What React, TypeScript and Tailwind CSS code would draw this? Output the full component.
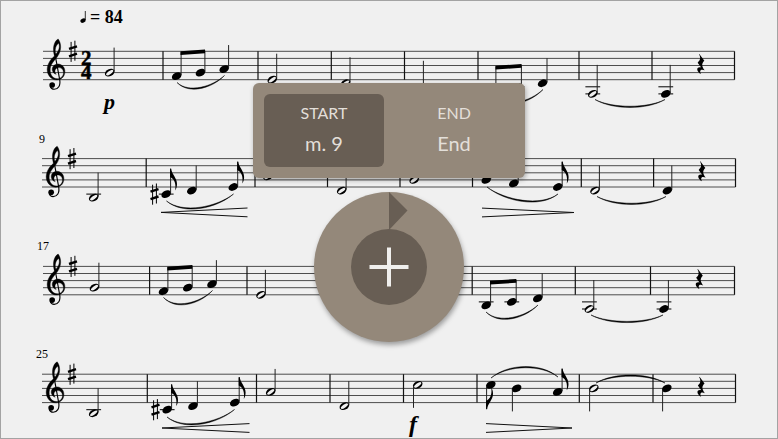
import { useState } from "react";

type Note = {
  x: number;
  pos: number; // half spaces below the top staff line
  half?: boolean;
  stem?: number; // stem length, negative when it points down
  flag?: boolean;
  sharp?: boolean;
};
type Curve = [number, number, number, number, number];
type Beam = [number, number, number, number];
type Hairpin = { from: number; to: number; y: number; closing?: boolean };
type System = {
  top: number;
  left: number;
  right: number;
  label?: { text: string; x: number };
  bars: number[];
  notes: Note[];
  beams: Beam[];
  curves: Curve[];
  hairpins: Hairpin[];
  rest: number;
};

const STEP = 3.55;

const systems: System[] = [
  {
    top: 51.3, left: 43, right: 734.5,
    bars: [163, 258, 331.3, 404.5, 478, 579, 652, 734.5],
    notes: [
      { x: 109.7, pos: 6, half: true, stem: 25 },
      { x: 176.7, pos: 7, stem: 24 },
      { x: 200.5, pos: 6, stem: 22 },
      { x: 224.2, pos: 5, stem: 24 },
      { x: 272.3, pos: 8, half: true, stem: 26 },
      { x: 345.6, pos: 9, half: true, stem: 26 },
      { x: 419, pos: 10, half: true, stem: 26 },
      { x: 491.5, pos: 11, stem: 24 },
      { x: 517, pos: 10, stem: 22 },
      { x: 542.6, pos: 9, stem: 25 },
      { x: 592.8, pos: 12, half: true, stem: 29 },
      { x: 665.8, pos: 12, stem: 29 },
    ],
    beams: [[180.5, 51.2, 205, 49.4], [495.5, 65.7, 521.5, 64]],
    curves: [[177, 82.5, 224.5, 75.5, 11], [492, 97, 543, 89.5, 12], [595, 99.5, 665, 99.5, 9]],
    hairpins: [],
    rest: 701,
  },
  {
    top: 158.6, left: 42, right: 735.5,
    label: { text: "9", x: 39 },
    bars: [146.2, 255, 327.5, 400, 472.5, 581.3, 653.6, 735.5],
    notes: [
      { x: 93.7, pos: 11, half: true, stem: 25 },
      { x: 166.2, pos: 10, stem: 25, flag: true, sharp: true },
      { x: 191.8, pos: 9, stem: 25 },
      { x: 233.3, pos: 8, stem: 25, flag: true },
      { x: 268, pos: 5, half: true, stem: 24 },
      { x: 341.7, pos: 9, half: true, stem: 25 },
      { x: 414.2, pos: 6, half: true, stem: 24 },
      { x: 486.3, pos: 6, stem: 24 },
      { x: 513.8, pos: 7, stem: 24 },
      { x: 557.8, pos: 8, stem: 25, flag: true },
      { x: 595, pos: 9, half: true, stem: 25 },
      { x: 667.4, pos: 9, stem: 25 },
    ],
    beams: [],
    curves: [[166.5, 201, 233.5, 194, 13], [487, 187, 558, 194, 13], [597, 196.5, 666, 196.5, 9]],
    hairpins: [{ from: 161, to: 247.5, y: 212.4 }, { from: 482, to: 574, y: 212.5, closing: true }],
    rest: 702,
  },
  {
    top: 266.4, left: 43, right: 734.5,
    label: { text: "17", x: 37 },
    bars: [149.6, 247, 325, 400, 472.2, 575.3, 650.5, 734.5],
    notes: [
      { x: 94.5, pos: 6, half: true, stem: 25 },
      { x: 163.5, pos: 7, stem: 24 },
      { x: 187.8, pos: 6, stem: 22 },
      { x: 212, pos: 5, stem: 24 },
      { x: 261, pos: 8, half: true, stem: 25 },
      { x: 486.2, pos: 11, stem: 24 },
      { x: 511.8, pos: 10, stem: 22 },
      { x: 537.8, pos: 9, stem: 25 },
      { x: 589.4, pos: 12, half: true, stem: 29 },
      { x: 664, pos: 12, stem: 29 },
    ],
    beams: [[167.3, 266.8, 192.3, 265], [490, 280.8, 516.3, 279]],
    curves: [[163.5, 297.5, 212.5, 290.5, 12], [486, 312, 538, 305, 12], [591, 315, 663, 315, 8.5]],
    hairpins: [],
    rest: 699.5,
  },
  {
    top: 374.2, left: 42, right: 735.5,
    label: { text: "25", x: 36 },
    bars: [147.3, 256.5, 330, 403.5, 477, 579.3, 653, 735.5],
    notes: [
      { x: 93.7, pos: 11, half: true, stem: 25 },
      { x: 167.2, pos: 10, stem: 25, flag: true, sharp: true },
      { x: 193, pos: 9, stem: 25 },
      { x: 234.8, pos: 8, stem: 25, flag: true },
      { x: 270.7, pos: 5, half: true, stem: 23 },
      { x: 344.4, pos: 9, half: true, stem: 25 },
      { x: 417.7, pos: 3, half: true, stem: -23 },
      { x: 490.8, pos: 3, stem: -24, flag: true },
      { x: 516.6, pos: 4, stem: -23 },
      { x: 557.7, pos: 5, stem: 23, flag: true },
      { x: 593.8, pos: 4, half: true, stem: -23 },
      { x: 666.8, pos: 4, stem: -23 },
    ],
    beams: [],
    curves: [[167, 417, 234.5, 409.5, 13], [491, 378, 558, 377, -13], [596, 383, 665, 383, -9]],
    hairpins: [{ from: 162, to: 249.5, y: 428 }, { from: 486, to: 572, y: 428, closing: true }],
    rest: 701.2,
  },
];

function TrebleClef({ x, top }: { x: number; top: number }) {
  return (
    <g transform={`translate(${x} ${top}) scale(0.3333) translate(-170 -154)`}>
      <path
        fillRule="evenodd"
        stroke="black"
        strokeWidth="1.2"
        d="M164 168 C157 146 162 124 175 117 C185 130 186 152 172 171 C161 184 151 195 151 210 C151 226 160 236 172 236 C184 236 191 228 191 218 C191 208 183 202 175 203 C166 204 162 214 169 223 C157 220 154 205 161 198 C168 191 178 190 186 196 C197 203 198 221 190 231 C182 241 166 243 155 235 C141 224 139 206 146 191 C151 180 158 173 164 168 Z M168 163 C176 153 181 144 177 130 C167 136 164 150 168 163 Z"
      />
      <path d="M165 160 L179 236 C184 258 174 268 163 268 C157 268 153 265 151 259" fill="none" stroke="black" strokeWidth="3.4" />
      <circle cx="157" cy="255" r="8.5" />
    </g>
  );
}

function Sharp({ x, y }: { x: number; y: number }) {
  return (
    <g transform={`translate(${x} ${y})`} stroke="black">
      <path d="M-1.9 -9.4V10.6M1.9 -10.6V9.4" strokeWidth="1" />
      <path d="M-4 -2.4L4 -5M-4 5L4 2.4" strokeWidth="2.4" />
    </g>
  );
}

function NoteMark({ note, top }: { note: Note; top: number }) {
  const y = top + note.pos * STEP;
  const stem = note.stem ?? 0;
  const side = stem > 0 ? 4.4 : -4.2;
  const ledgers = [10, 12].filter((p) => p <= note.pos);
  return (
    <g>
      {ledgers.map((p) => (
        <path key={p} d={`M${note.x - 7.4} ${top + p * STEP}h14.8`} stroke="black" strokeWidth="1" />
      ))}
      <g transform={`translate(${note.x} ${y}) rotate(-27)`}>
        <ellipse rx="5.1" ry="3.5" />
        {note.half && <ellipse rx="4.2" ry="1.6" transform="rotate(-8)" fill="#f0f0f0" />}
      </g>
      <path d={`M${note.x + side} ${y - (stem > 0 ? 1 : -1)}V${y - stem}`} stroke="#222" strokeWidth="1" />
      {note.flag && (
        <path
          transform={`translate(${note.x + side} ${y - stem}) scale(1 ${stem > 0 ? 1 : -1})`}
          d="M-0.5 -0.5 H0.5 C1 5 6.4 9 6.4 15 C6.4 18 5.6 20 4.6 21.4 C5.6 15 4 10 -0.5 8 Z"
        />
      )}
      {note.sharp && <Sharp x={note.x - 11.7} y={y} />}
    </g>
  );
}

function Slur({ curve: [x1, y1, x2, y2, d] }: { curve: Curve }) {
  const a = x1 + (x2 - x1) * 0.25;
  const b = x1 + (x2 - x1) * 0.75;
  const outer = d + Math.sign(d) * 1.6;
  return (
    <path
      d={`M${x1} ${y1}C${a} ${y1 + d} ${b} ${y2 + d} ${x2} ${y2}C${b} ${y2 + outer} ${a} ${y1 + outer} ${x1} ${y1}Z`}
      stroke="black"
      strokeWidth="0.5"
    />
  );
}

function Staff({ system: s }: { system: System }) {
  return (
    <g>
      {[0, 2, 4, 6, 8].map((p) => (
        <path key={p} d={`M${s.left} ${s.top + p * STEP}H${s.right}`} stroke="#3a3a3a" strokeWidth="0.9" />
      ))}
      {s.bars.map((x) => (
        <path key={x} d={`M${x} ${s.top}V${s.top + 8 * STEP}`} stroke="#111" strokeWidth="1.2" />
      ))}
      <TrebleClef x={s.left === 43 ? 56.5 : 55.5} top={s.top} />
      <Sharp x={s.left === 43 ? 73 : 72} y={s.top} />
      {s.label && (
        <text x={s.label.x} y={s.top - 16} fontSize="12">
          {s.label.text}
        </text>
      )}
      {s.notes.map((n) => (
        <NoteMark key={n.x} note={n} top={s.top} />
      ))}
      {s.beams.map(([x1, y1, x2, y2]) => (
        <path key={x1} d={`M${x1} ${y1}L${x2} ${y2}v3.8L${x1} ${y1 + 3.8}Z`} />
      ))}
      {s.curves.map((c) => (
        <Slur key={c[0]} curve={c} />
      ))}
      {s.hairpins.map((h) => {
        const tip = h.closing ? h.to : h.from;
        const mouth = h.closing ? h.from : h.to;
        return (
          <path key={h.from} d={`M${mouth} ${h.y - 4.4}L${tip} ${h.y}L${mouth} ${h.y + 4.4}`} fill="none" stroke="#111" strokeWidth="1" />
        );
      })}
      <path
        transform={`translate(${s.rest} ${s.top}) scale(0.3333) translate(-549 -64)`}
        d="M544 72 L559 92 C550 101 551 108 560 121 C549 116 543 121 549 132 C535 125 533 109 549 112 L539 98 C547 90 549 84 543 73Z"
      />
    </g>
  );
}

function Score() {
  return (
    <svg
      viewBox="0 0 778 439"
      className="block h-auto w-full font-['Liberation_Serif',serif]"
      role="img"
      aria-label="Sheet music"
    >
      <ellipse cx="83" cy="20.6" rx="2.8" ry="2" transform="rotate(-25 83 20.6)" />
      <path d="M85.3 20V11" stroke="black" strokeWidth="0.8" />
      <text x="90" y="23" fontSize="18" fontWeight="700">= 84</text>
      {systems.map((s) => (
        <Staff key={s.top} system={s} />
      ))}
      <text fontSize="21" fontWeight="700" stroke="black" strokeWidth="0.5">
        <tspan x="81" y="65">2</tspan>
        <tspan x="81" y="79">4</tspan>
      </text>
      <text x="104" y="109" fontSize="22" fontWeight="700" fontStyle="italic">p</text>
      <text x="409" y="432" fontSize="24" fontWeight="700" fontStyle="italic">f</text>
    </svg>
  );
}

const points = [
  { id: "start", title: "START", value: "m. 9" },
  { id: "end", title: "END", value: "End" },
];

function RangePanel() {
  const [active, setActive] = useState("start");
  return (
    <div className="pointer-events-auto flex gap-2.5 rounded-md bg-[#94887a] p-[11px] shadow-[1px_2px_5px_rgba(0,0,0,0.3)]">
      {points.map((p) => (
        <button
          key={p.id}
          type="button"
          aria-pressed={active === p.id}
          onClick={() => setActive(p.id)}
          className={`flex w-[120px] flex-col items-center gap-1 rounded-md pt-[7px] pb-2.5 text-[#e3dfd9] ${
            active === p.id ? "bg-[#685e54]" : "bg-transparent"
          }`}
        >
          <span className="text-base leading-6">{p.title}</span>
          <span className="text-xl leading-7">{p.value}</span>
        </button>
      ))}
    </div>
  );
}

function Dial() {
  return (
    <div className="pointer-events-auto relative flex size-[150px] items-center justify-center rounded-full bg-[#94887a] shadow-[1px_3px_5px_rgba(0,0,0,0.35)]">
      <svg viewBox="0 0 150 150" className="absolute inset-0" aria-hidden="true">
        <path d="M75 0L93.5 18.5L75 38Z" fill="#685e54" />
      </svg>
      <button
        type="button"
        aria-label="Add"
        className="relative flex size-[76px] items-center justify-center rounded-full bg-[#685e54]"
      >
        <svg viewBox="0 0 40 40" className="size-10" aria-hidden="true">
          <path d="M0.5 20H39.5M20 0.5V39.5" stroke="#f0efed" strokeWidth="4" />
        </svg>
      </button>
    </div>
  );
}

export default function App() {
  return (
    <main className="relative overflow-hidden bg-[#f0f0f0] font-[Lato,sans-serif]">
      <Score />
      <div className="pointer-events-none absolute inset-0 flex flex-col items-center gap-3.5 border border-[#a3a3a3] pt-[82px]">
        <RangePanel />
        <Dial />
      </div>
    </main>
  );
}
